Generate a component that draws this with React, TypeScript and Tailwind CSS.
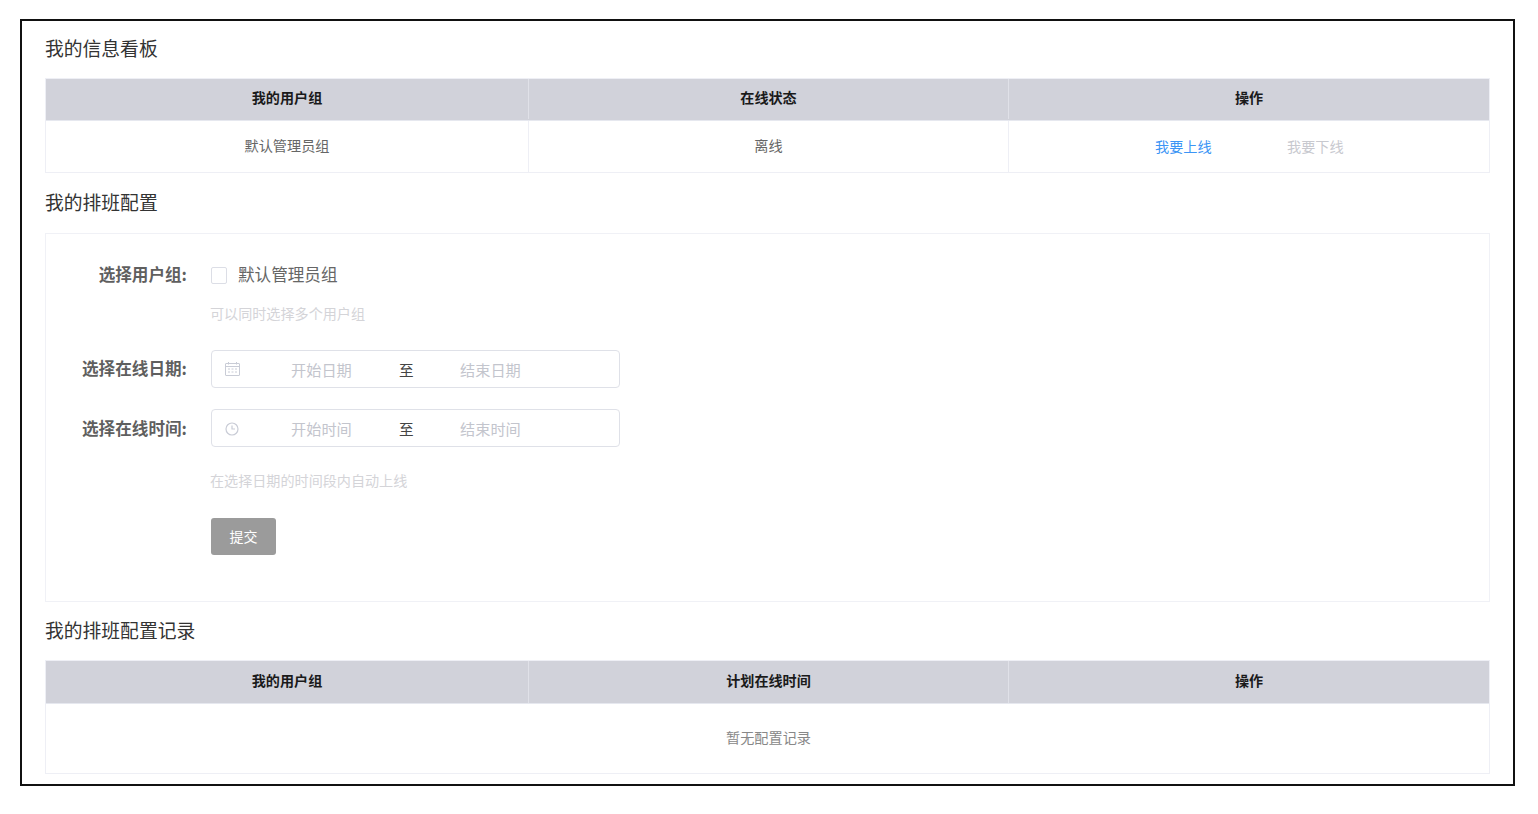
import React from "react";

const font = { fontFamily: '"Noto Sans CJK SC", "Liberation Sans", sans-serif' };

function Title({ children }: { children: React.ReactNode }) {
  return <div className="h-[28px] text-[18.8px] leading-[28px] text-[#333]">{children}</div>;
}

function Head({ items, tall }: { items: string[]; tall?: boolean }) {
  return (
    <div className={`grid grid-cols-[483px_480px_1fr] border-b border-[#e6e8ef] bg-[#d1d2da] ${tall ? "h-[43px] pb-[0px]" : "h-[42px] pb-[1px]"}`}>
      {items.map((t, i) => (
        <div
          key={t}
          className={`flex items-center justify-center pb-[3px] text-[14.1px] font-bold text-[#1a1a1a] ${i < 2 ? "border-r border-[#e0e1e8]" : ""}`}
        >
          {t}
        </div>
      ))}
    </div>
  );
}

function CalendarIcon() {
  return (
    <svg width="15" height="14" viewBox="0 0 15 14" fill="none" stroke="#c9ccd6" strokeWidth="1">
      <rect x="0.5" y="1.5" width="14" height="12" rx="0.5" />
      <path d="M0.5 4.5H14.5M3.5 0V2.5M11.5 0V2.5" />
      <path d="M3 7h2M6.5 7h2M10 7h2M3 10h2M6.5 10h2M10 10h2" />
    </svg>
  );
}

function ClockIcon() {
  return (
    <svg className="mt-[2px]" width="14" height="14" viewBox="0 0 14 14" fill="none" stroke="#c9ccd6" strokeWidth="1.2">
      <circle cx="7" cy="7" r="6" />
      <path d="M7 3.5V7H10" />
    </svg>
  );
}

function RangeRow({ label, icon, start, end, offset, labelPad }: { label: string; icon: React.ReactNode; start: string; end: string; offset: string; labelPad: string }) {
  return (
    <div className={`flex items-center ${offset}`}>
      <div className={`w-[142px] pr-[1px] text-right text-[16.6px] font-bold text-[#5f5f5f] ${labelPad}`}>{label}</div>
      <div className="ml-[23px] flex h-[38px] w-[409px] items-center rounded-[4px] border border-[#dfe1e8] pl-[12px]">
        <div className="flex w-[16px] justify-center">{icon}</div>
        <div className="ml-[51px] w-[61px] whitespace-nowrap pt-[2px] text-[15.2px] text-[#c3c5cd]">{start}</div>
        <div className="ml-[47px] w-[14px] whitespace-nowrap pt-[2px] text-[14.6px] text-[#444]">至</div>
        <div className="ml-[47px] whitespace-nowrap pt-[2px] text-[15.2px] text-[#c3c5cd]">{end}</div>
      </div>
    </div>
  );
}

export default function App() {
  return (
    <div style={font} className="h-[814px] w-[1538px] overflow-hidden bg-white pl-[20px] pt-[19px]">
      <div className="flex h-[767px] w-[1495px] flex-col border-2 border-[#111] pl-[23px] pr-[23px] pt-[13px]">
        <Title>我的信息看板</Title>
        <div className="mt-[16px] w-[1445px] border border-[#eeeff5]">
          <Head items={["我的用户组", "在线状态", "操作"]} />
          <div className="grid h-[51px] grid-cols-[483px_480px_1fr] text-[14.15px] text-[#666]">
            <div className="flex items-center justify-center border-r border-[#eeeff5] pb-[2px]">默认管理员组</div>
            <div className="flex items-center justify-center border-r border-[#eeeff5] pb-[2px]">离线</div>
            <div className="flex items-center pl-[146px]">
              <span className="w-[132px] text-[#3c95f5]">我要上线</span>
              <span className="text-[#c8c9cf]">我要下线</span>
            </div>
          </div>
        </div>
        <div className="mt-[15px]">
          <Title>我的排班配置</Title>
        </div>
        <div className="mt-[17px] h-[369px] w-[1445px] border border-[#f0f1f6] pt-[28px]">
          <div className="flex items-center">
            <div className="w-[142px] pr-[1px] text-right text-[16.6px] font-bold text-[#5f5f5f]">选择用户组:</div>
            <div className="ml-[23px] mt-[2px] h-[17px] w-[16px] rounded-[2px] border border-[#dcdee6]" />
            <div className="ml-[11px] text-[16.6px] text-[#666]">默认管理员组</div>
          </div>
          <div className="ml-[164px] mt-[16px] text-[14.1px] leading-[20px] text-[#d4d4d8]">可以同时选择多个用户组</div>
          <RangeRow offset="mt-[27px]" labelPad="pb-[1px]" label="选择在线日期:" icon={<CalendarIcon />} start="开始日期" end="结束日期" />
          <RangeRow offset="mt-[21px]" labelPad="pt-[1px]" label="选择在线时间:" icon={<ClockIcon />} start="开始时间" end="结束时间" />
          <div className="ml-[164px] mt-[23px] text-[14.1px] leading-[20px] text-[#d4d4d8]">在选择日期的时间段内自动上线</div>
          <div className="ml-[165px] mt-[28px] flex h-[37px] w-[65px] items-center justify-center rounded-[3px] bg-[#9b9b9b] text-[14px] text-white">
            提交
          </div>
        </div>
        <div className="mt-[14px]">
          <Title>我的排班配置记录</Title>
        </div>
        <div className="mt-[16px] w-[1445px] border border-[#eeeff5]">
          <Head tall items={["我的用户组", "计划在线时间", "操作"]} />
          <div className="flex h-[69px] items-center justify-center pb-[2px] pl-[2px] text-[14.15px] text-[#888]">暂无配置记录</div>
        </div>
      </div>
    </div>
  );
}
